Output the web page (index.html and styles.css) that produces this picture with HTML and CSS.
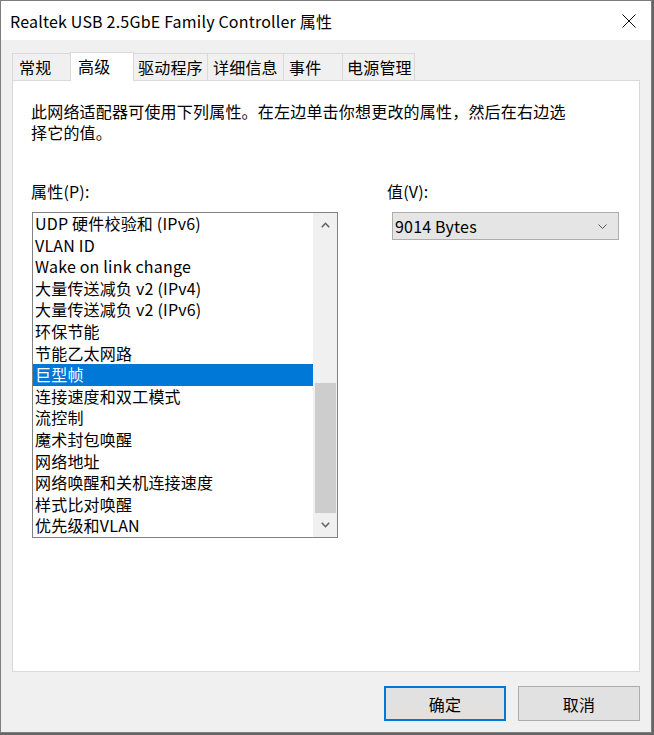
FILE: index.html
```html
<!DOCTYPE html>
<html lang="zh-CN">
<head>
<meta charset="utf-8">
<title>Realtek USB 2.5GbE Family Controller 属性</title>
<link rel="stylesheet" href="styles.css">
</head>
<body>
<div class="window">
  <div class="titlebar">
    <span class="title">Realtek USB 2.5GbE Family Controller 属性</span>
    <svg class="close" width="14" height="14" viewBox="0 0 14 14"><path d="M0.5 0.5 L13.5 13.5 M13.5 0.5 L0.5 13.5" stroke="#111" stroke-width="1" fill="none"/></svg>
  </div>
  <div class="body">
    <div class="tabs">
      <div class="tab t1">常规</div>
      <div class="tab t2 active">高级</div>
      <div class="tab t3">驱动程序</div>
      <div class="tab t4">详细信息</div>
      <div class="tab t5">事件</div>
      <div class="tab t6">电源管理</div>
    </div>
    <div class="panel">
      <p class="desc">此网络适配器可使用下列属性。在左边单击你想更改的属性，然后在右边选<br>择它的值。</p>
      <div class="props">
        <div class="col-left">
          <div class="label">属性(P):</div>
          <div class="listbox">
            <ul class="items">
              <li>UDP 硬件校验和 (IPv6)</li>
              <li>VLAN ID</li>
              <li>Wake on link change</li>
              <li>大量传送减负 v2 (IPv4)</li>
              <li>大量传送减负 v2 (IPv6)</li>
              <li>环保节能</li>
              <li>节能乙太网路</li>
              <li class="sel">巨型帧</li>
              <li>连接速度和双工模式</li>
              <li>流控制</li>
              <li>魔术封包唤醒</li>
              <li>网络地址</li>
              <li>网络唤醒和关机连接速度</li>
              <li>样式比对唤醒</li>
              <li>优先级和VLAN</li>
            </ul>
            <div class="scrollbar">
              <div class="sb-btn">
                <svg width="9" height="6" viewBox="0 0 9 6"><path d="M0.8 5.2 L4.5 1.3 L8.2 5.2" stroke="#606060" stroke-width="1.6" fill="none"/></svg>
              </div>
              <div class="sb-gap"></div>
              <div class="sb-thumb"></div>
              <div class="sb-btn">
                <svg width="9" height="6" viewBox="0 0 9 6"><path d="M0.8 0.8 L4.5 4.7 L8.2 0.8" stroke="#606060" stroke-width="1.6" fill="none"/></svg>
              </div>
            </div>
          </div>
        </div>
        <div class="col-right">
          <div class="label">值(V):</div>
          <div class="combo">
            <span>9014 Bytes</span>
            <svg width="9" height="5" viewBox="0 0 9 5"><path d="M0.5 0.5 L4.5 4.5 L8.5 0.5" stroke="#555" stroke-width="1" fill="none"/></svg>
          </div>
        </div>
      </div>
    </div>
    <div class="footer">
      <button class="btn default">确定</button>
      <button class="btn">取消</button>
    </div>
  </div>
</div>
</body>
</html>
```
FILE: styles.css
```css
* { box-sizing: border-box; }
html, body { margin: 0; padding: 0; }
body {
  background: #666666;
  width: 654px;
  height: 735px;
  font-family: "Noto Sans CJK SC", "Noto Sans", sans-serif;
  font-size: 16px;
  letter-spacing: 0.2px;
  color: #000;
}
.window {
  width: 652px;
  height: 733px;
  border: 1px solid #7d7d7d;
  background: #f0f0f0;
  display: flex;
  flex-direction: column;
}
.titlebar {
  height: 39px;
  background: #fff;
  display: flex;
  align-items: center;
  justify-content: space-between;
  padding: 0 15px 0 9px;
}
.title { font-size: 16px; line-height: 20px; }
.close { display: block; }
.body {
  flex: 1;
  display: flex;
  flex-direction: column;
  padding: 12px 11px 0 11px;
}
.tabs {
  display: flex;
  align-items: flex-end;
  height: 28px;
  position: relative;
  z-index: 1;
}
.tab {
  height: 27px;
  line-height: 26px;
  border: 1px solid #d9d9d9;
  border-bottom: none;
  background: #f0f0f0;
  margin-left: -1px;
  white-space: nowrap;
}
.tab.t1 { margin-left: 0; width: 59px; padding-left: 6px; }
.tab.t2 { width: 64px; padding-left: 7px; }
.tab.t3 { width: 75px; padding-left: 4px; }
.tab.t4 { width: 77px; padding-left: 5px; }
.tab.t5 { width: 60px; padding-left: 5px; }
.tab.t6 { width: 73px; padding-left: 4px; }
.tab.active {
  background: #fff;
  height: 29px;
  line-height: 26px;
  margin-bottom: -1px;
}
.panel {
  height: 592px;
  background: #fff;
  border: 1px solid #d9d9d9;
  padding: 20px 18px 0 18px;
}
.desc {
  margin: 0;
  line-height: 21px;
}
.props {
  display: flex;
  margin-top: 38px;
}
.label { line-height: 21px; }
.col-left { width: 356px; }
.listbox {
  margin-top: 10px;
  margin-left: 1px;
  width: 306px;
  height: 326px;
  border: 1px solid #828282;
  display: flex;
}
.items {
  list-style: none;
  margin: 0;
  padding: 0;
  width: 280px;
}
.items li {
  height: 21.6px;
  line-height: 21.6px;
  padding-left: 2px;
  white-space: nowrap;
}
.items li.sel { background: #0078d7; color: #fff; }
.scrollbar {
  width: 24px;
  background: #f0f0f0;
  display: flex;
  flex-direction: column;
  align-items: center;
}
.sb-btn {
  height: 24px;
  width: 100%;
  display: flex;
  align-items: center;
  justify-content: center;
}
.sb-gap { height: 146px; }
.sb-thumb { height: 130px; width: 21px; background: #cdcdcd; }
.col-right { display: flex; flex-direction: column; }
.combo {
  margin-top: 10px;
  margin-left: 5px;
  width: 227px;
  height: 28px;
  background: #e5e5e5;
  border: 1px solid #adadad;
  display: flex;
  align-items: center;
  justify-content: space-between;
  padding: 0 11px 0 2px;
}
.footer {
  display: flex;
  justify-content: flex-end;
  gap: 12px;
  padding-top: 14px;
  padding-right: 0;
}
.btn {
  font-family: "Noto Sans CJK SC", "Noto Sans", sans-serif;
  font-size: 16px;
  letter-spacing: 0.2px;
  color: #000;
  width: 122px;
  height: 35px;
  background: #e1e1e1;
  border: 1px solid #adadad;
  padding: 0;
}
.btn.default { border: 2px solid #0078d7; }
```
